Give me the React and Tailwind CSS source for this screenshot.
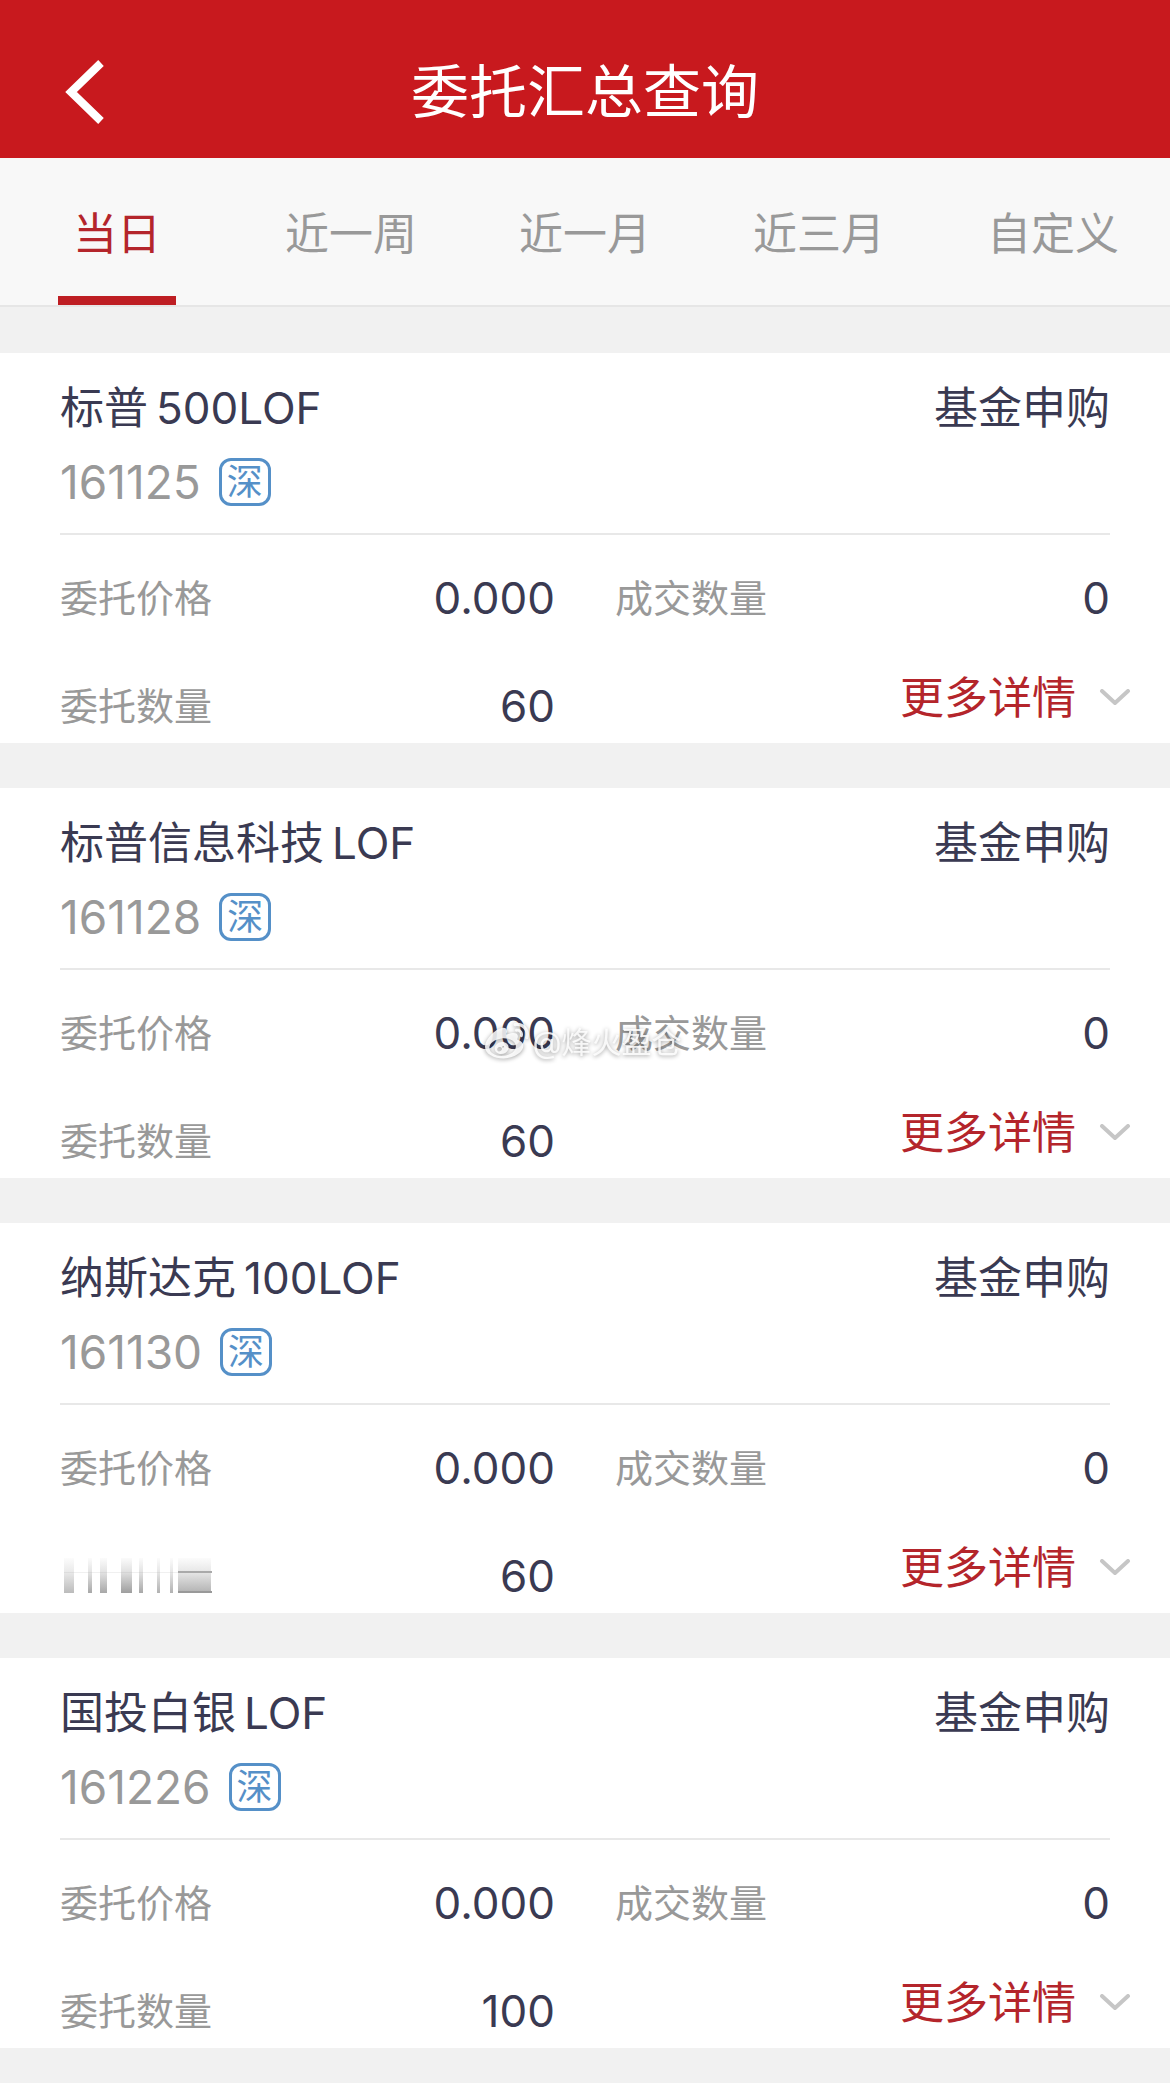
import { useState } from "react";
import { FaWeibo } from "react-icons/fa";

const TABS = ["当日", "近一周", "近一月", "近三月", "自定义"];

const ORDERS = [
  { name: "标普", suffix: "500LOF", code: "161125", qty: "60" },
  { name: "标普信息科技", suffix: "LOF", code: "161128", qty: "60" },
  { name: "纳斯达克", suffix: "100LOF", code: "161130", qty: "60", smeared: true },
  { name: "国投白银", suffix: "LOF", code: "161226", qty: "100" },
];

// Vertical streaks of the smeared label: [x, width, strength]
const STREAKS = [
  [4, 10, 0.7],
  [28, 4, 0.9],
  [40, 7, 0.9],
  [61, 11, 1],
  [79, 4, 0.9],
  [97, 3, 0.8],
  [110, 3, 0.8],
  [118, 33, 0.8],
];

function SmearedLabel() {
  return (
    <svg role="img" aria-label="委托数量" className="h-[36px] w-[152px]" viewBox="0 0 152 36">
      <defs>
        <linearGradient id="smear" x1="0" y1="0" x2="0" y2="1">
          <stop offset="0" stopColor="#999" stopOpacity="0.04" />
          <stop offset="0.4" stopColor="#999" stopOpacity="0.3" />
          <stop offset="1" stopColor="#999" stopOpacity="0.95" />
        </linearGradient>
      </defs>
      {STREAKS.map(([x, w, strength]) => (
        <rect key={x} x={x} y="0" width={w} height="35" fill="url(#smear)" opacity={strength} />
      ))}
      <rect x="4" y="14" width="114" height="1" fill="#999" opacity="0.15" />
      <rect x="118" y="13" width="34" height="2" fill="#aaa" />
      <rect x="118" y="33" width="34" height="2" fill="#999" />
    </svg>
  );
}

function Field({ label, value, smeared }) {
  return (
    <div className="flex h-[60px] items-center justify-between">
      <dt className="text-[38px] text-[#999]">{smeared ? <SmearedLabel /> : label}</dt>
      <dd className="text-[44px] text-[#3a3a52]">{value}</dd>
    </div>
  );
}

function OrderCard({ order }) {
  return (
    <article className="bg-white px-[60px] pb-[7px] pt-[24px]">
      <div className="border-b-2 border-[#e8e8e8] pb-[21px]">
        <div className="flex h-[60px] items-center justify-between pt-[2px] text-[44px] text-[#3a3a52]">
          <h2 className="flex gap-[8px]">
            <span>{order.name}</span>
            <span>{order.suffix}</span>
          </h2>
          <span>基金申购</span>
        </div>
        <div className="mt-[15px] flex h-[60px] items-center gap-[18px]">
          <span className="text-[46px] text-[#999]">{order.code}</span>
          <span className="flex h-[48px] w-[52px] items-center justify-center rounded-[12px] border-3 border-[#5590c8] text-[36px] leading-none text-[#5590c8]">
            深
          </span>
        </div>
      </div>
      <div className="grid grid-cols-2 gap-x-[60px] pt-[33px]">
        <dl className="flex flex-col gap-[48px]">
          <Field label="委托价格" value="0.000" />
          <Field label="委托数量" value={order.qty} smeared={order.smeared} />
        </dl>
        <div className="flex flex-col gap-[40px]">
          <dl>
            <Field label="成交数量" value="0" />
          </dl>
          <button type="button" className="-mr-[21px] flex h-[60px] items-center gap-[23px] self-end text-[44px] text-[#b4252b]">
            更多详情
            <svg className="h-[18px] w-[32px]" viewBox="0 0 32 18" fill="none" stroke="#c6c6c6" strokeWidth="4" strokeLinecap="round" strokeLinejoin="round" aria-hidden="true">
              <path d="M3 2 16 14 29 2" />
            </svg>
          </button>
        </div>
      </div>
    </article>
  );
}

export default function App() {
  const [active, setActive] = useState("当日");

  return (
    <div className="relative min-h-screen bg-[#f1f1f1] pb-[35px] font-['Inter','Noto_Sans_CJK_SC',sans-serif] leading-none">
      <header className="grid h-[158px] grid-cols-[1fr_auto_1fr] items-center bg-[#c8191e] px-[60px] pt-[26px] text-white">
        <button type="button" aria-label="返回" className="justify-self-start">
          <svg className="h-[64px] w-[48px]" viewBox="0 0 48 64" fill="none" stroke="currentColor" strokeWidth="8" aria-hidden="true">
            <path d="M41 3 11 32 41 61" />
          </svg>
        </button>
        <h1 className="text-[58px]">委托汇总查询</h1>
      </header>

      <nav className="grid grid-cols-5 border-b-2 border-[#e6e6e6] bg-[#f8f8f8]">
        {TABS.map((tab) => (
          <button
            key={tab}
            type="button"
            onClick={() => setActive(tab)}
            aria-current={tab === active ? "page" : undefined}
            className={
              tab === active
                ? "mx-auto h-[147px] w-[118px] border-b-[9px] border-[#be1e23] pt-[13px] text-[44px] text-[#b4252b]"
                : "h-[147px] pt-[4px] text-[44px] text-[#999]"
            }
          >
            {tab}
          </button>
        ))}
      </nav>

      <main className="mt-[46px] flex flex-col gap-[45px]">
        {ORDERS.map((order) => (
          <OrderCard key={order.code} order={order} />
        ))}
      </main>

      <div className="pointer-events-none absolute inset-0 flex items-center justify-center gap-[4px] pr-[4px] text-[30px] text-white/85 drop-shadow-[0_1px_2px_rgba(0,0,0,0.45)]">
        <FaWeibo className="size-[44px]" aria-hidden="true" />
        <span>@烽火盈仓</span>
      </div>
    </div>
  );
}
